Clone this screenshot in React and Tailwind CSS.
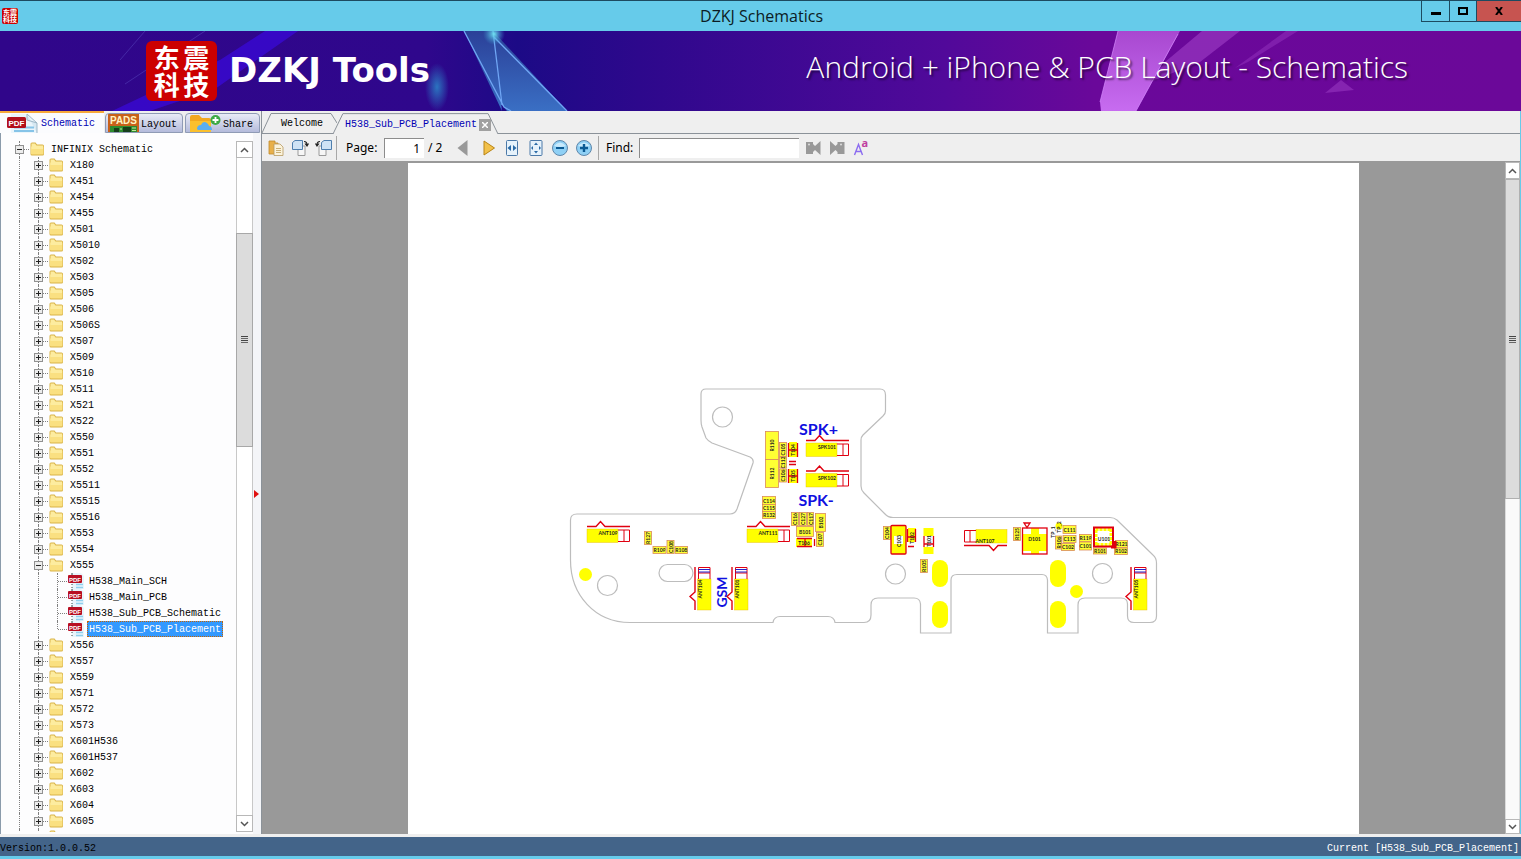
import { useState } from "react";

const FOLDERS_BEFORE = [
    "X180", "X451", "X454", "X455", "X501", "X5010", "X502", "X503", "X505", "X506", "X506S", "X507",
    "X509", "X510", "X511", "X521", "X522", "X550", "X551", "X552", "X5511", "X5515", "X5516", "X553", "X554",
];
const FOLDERS_AFTER = [
    "X556", "X557", "X559", "X571", "X572", "X573", "X601H536", "X601H537", "X602", "X603", "X604", "X605",
];
const FILES = ["H538_Main_SCH", "H538_Main_PCB", "H538_Sub_PCB_Schematic", "H538_Sub_PCB_Placement"];

// x, y, width, height, label, vertical
const PARTS = [
    [765.5, 431.5, 13, 28, "R110", true],
    [765.5, 459.5, 13, 28, "R112", true],
    [779.5, 442.5, 7, 14, "C105", true],
    [779.5, 457, 7, 11, "C112", true],
    [779.5, 469, 7, 13, "C106", true],
    [762.5, 496.5, 13, 8, "C114", false],
    [762.5, 504.5, 13, 7, "C115", false],
    [762.5, 511.5, 13, 7, "R132", false],
    [791.5, 512.5, 7, 13, "C116", true],
    [799.5, 512.5, 7, 13, "C127", true],
    [807.5, 512.5, 6, 13, "C117", true],
    [815.5, 513.5, 10, 18, "B102", true],
    [796.5, 526.5, 17, 10, "B101", false],
    [816.5, 532.5, 7, 14, "C107", true],
    [644.5, 531.5, 7, 13, "R127", true],
    [653, 546.5, 13, 7, "R109", false],
    [667, 540.5, 7, 13, "C108", true],
    [675, 546.5, 12.5, 7, "R108", false],
    [883.5, 526.5, 7, 13, "C104", true],
    [920.5, 559.5, 7, 13, "R105", true],
    [1013.5, 527.5, 7, 13, "R125", true],
    [1063, 525.5, 13, 8, "C111", false],
    [1055.5, 536, 6, 13, "R106", true],
    [1063, 535.5, 13, 7, "C113", false],
    [1061.5, 543.5, 13, 7, "C102", false],
    [1079.5, 534.5, 12, 7, "R119", false],
    [1079.5, 542, 12, 8, "C101", false],
    [1093.5, 548, 13, 6, "R101", false],
    [1115.5, 540.5, 12, 7, "R121", false],
    [1114.5, 548, 13, 6.5, "R102", false],
];

const Tiny = ({ x, y, vertical, children }) => (
    <text
        x={x}
        y={y}
        transform={vertical ? `rotate(-90 ${x} ${y})` : undefined}
        textAnchor="middle"
        dominantBaseline="central"
        fontSize="5"
        fontWeight="700"
        fill="#222"
    >
        {children}
    </text>
);

// spring contact: outline with a notch, pad and an open end
const Contact = ({ x, y, angle = 0, stripes = false }) => (
    <g transform={`translate(${x} ${y}) rotate(${angle})`}>
        <path d="M0 .5H9L13.5 -4.5L18 .5H43" fill="none" stroke="#e00010" strokeWidth="1.4" />
        <rect x="0" y="3" width="31" height="13.5" fill="#ff0" stroke="#e6b800" strokeWidth=".4" />
        <path d="M31 4H42.5V15.5H31M37 4V15.5" fill="none" stroke="#e00010" strokeWidth="1" />
        {stripes && <path d="M38 4V15.5M40.5 4V15.5" stroke="#2222cc" strokeWidth="1" />}
    </g>
);

const Board = () => (
    <svg viewBox="408 163 951 671" className="block w-full" fontFamily="Lato, 'Liberation Sans', sans-serif">
        <g fill="none" stroke="#bdbdbd" strokeWidth="1.2">
            <path d="M706 389H880Q885.500 389 885.500 395V411Q885.500 414 883 416L863 435Q861 437 861 440V486Q861 490 864 493L885 514Q888 517.500 893 517.500H1110Q1114 517.500 1117 520L1153 555Q1156.500 558 1156.500 563V616Q1156.500 622.500 1150 622.500H1134Q1127.500 622.500 1127.500 616V604Q1127.500 598 1121 598H1085Q1078 598 1078 605V633H1047.500V580Q1047 574.500 1042 574.500H957Q951 574.500 951 580V633H920.500V604Q920 598 914 598H878Q871 598 871 605V615Q871 622.500 864 622.500H835Q834 616.500 828 616.500H780Q774 616.500 773 622.500H630C595 622.500 570.500 595 570.500 560V520Q570.500 514 577 514H730Q735 514 737 509L753 463Q754 459 750 457L712 443Q708 441 706 438L702 427Q701 424 701 420V394Q701 389 706 389Z" />
            <circle cx="722.5" cy="417" r="10" />
            <circle cx="607.5" cy="585.5" r="10" />
            <circle cx="895.5" cy="574" r="10" />
            <circle cx="1102.500" cy="573.500" r="10" />
            <rect x="659" y="564.500" width="34" height="17" rx="8.500" />
        </g>
        <g fill="#ff0">
            <circle cx="585.5" cy="574.5" r="6.500" />
            <circle cx="1076.500" cy="591.500" r="6.500" />
            <rect x="932" y="560" width="16" height="27" rx="8" />
            <rect x="932" y="601" width="16" height="27" rx="8" />
            <rect x="1050" y="560" width="16" height="27" rx="8" />
            <rect x="1050" y="601" width="16" height="27" rx="8" />
        </g>

        <Contact x={587} y={526} />
        <Contact x={747} y={526} />
        <Contact x={806} y={440} />
        <Contact x={806} y={470.5} />
        <Contact x={1007} y={546} angle={180} />
        <Contact x={694.5} y={610} angle={-90} stripes />
        <Contact x={731.5} y={610} angle={-90} stripes />
        <Contact x={1130.5} y={610} angle={-90} stripes />
        <Tiny x={608} y={533}>ANT109</Tiny>
        <Tiny x={768} y={533}>ANT111</Tiny>
        <Tiny x={827} y={447}>SPK101</Tiny>
        <Tiny x={827} y={477.5}>SPK102</Tiny>
        <Tiny x={985} y={541}>ANT107</Tiny>
        <Tiny x={700} y={589} vertical>ANT104</Tiny>
        <Tiny x={737} y={589} vertical>ANT101</Tiny>
        <Tiny x={1136} y={589} vertical>ANT105</Tiny>

        {PARTS.map(([x, y, w, h, label, vertical]) => (
            <g key={`${label}-${x}`}>
                <rect x={x} y={y} width={w} height={h} fill="#ff3" stroke="#d98a5a" strokeWidth=".8" />
                <Tiny x={x + w / 2} y={y + h / 2} vertical={vertical}>{label}</Tiny>
            </g>
        ))}

        <g fill="#ff0">
            <rect x="789" y="442" width="8" height="15" />
            <rect x="789" y="469" width="8" height="14" />
            <rect x="796" y="538" width="16" height="9" />
            <rect x="891" y="526" width="15" height="28" />
            <rect x="908" y="528" width="8" height="14" />
            <rect x="923.500" y="528" width="10" height="8" />
            <rect x="923.500" y="547" width="10" height="7" />
            <path d="M1023 534H1031V528H1039V534H1047V551H1039V554H1031V551H1023Z" />
            <circle cx="1059" cy="526" r="3.500" />
        </g>
        <rect x="894" y="536" width="9" height="8" fill="#fff" />
        <g fill="none" stroke="#e00010" strokeWidth="1.3">
            <path d="M788.500 443V457M797.500 443V457M788.500 450H797.500M789 461.500H796M789 464.500H796M788.500 469V483M797.500 469V483M788.500 476H797.500" />
            <path d="M797 538.500H812M797 546.500H812M805 538V547M814.500 539V546" />
            <rect x="891" y="525.500" width="15" height="28.500" rx="1" />
            <path d="M907.500 529V542M915.500 529V542M907.500 537H915.500M908 546.500H914M924 536V547M933.500 536V547M924 544H933.500" />
            <rect x="1022.500" y="528" width="24.500" height="26" />
            <path d="M1024 523H1030L1027 527.500Z" />
            <path d="M1111 547H1115V541" strokeWidth="3" />
        </g>
        <rect x="1095.500" y="529" width="16" height="16" fill="#fff" stroke="#ff0" strokeWidth="4" strokeDasharray="3 1" />
        <rect x="1094" y="527.500" width="19" height="19" fill="none" stroke="#e00010" strokeWidth="2" />
        <Tiny x={793} y={450} vertical>T104</Tiny>
        <Tiny x={793} y={476} vertical>T105</Tiny>
        <Tiny x={804} y={543}>T106</Tiny>
        <Tiny x={898.5} y={541} vertical>C103</Tiny>
        <Tiny x={912} y={538} vertical>T102</Tiny>
        <Tiny x={928.5} y={541} vertical>T101</Tiny>
        <Tiny x={1034.5} y={539}>D101</Tiny>
        <Tiny x={1104} y={538.5}>U101</Tiny>
        <Tiny x={1053} y={532} vertical>TP_1</Tiny>
        <Tiny x={1059} y={527} vertical>TP_2</Tiny>

        <g fill="#1010e0" fontSize="16" fontWeight="700" textAnchor="middle">
            <text x="818.5" y="435">SPK+</text>
            <text x="816" y="505.5">SPK-</text>
            <text x="727" y="592" transform="rotate(-90 727 592)" fontSize="14">GSM</text>
        </g>
    </svg>
);

const FolderIcon = () => (
    <svg viewBox="0 0 16 16" className="h-4 w-4 shrink-0">
        <path d="M.500 3Q.500 1.500 2 1.500H5.500L7 3.500H12.500Q14 3.500 14 5V13Q14 14.500 12.500 14.500H2Q.500 14.500 .500 13Z" fill="#d9b347" />
        <path d="M1 5.500H13.500V12.500Q13.500 13.500 12.500 13.500H2Q1 13.500 1 12.500Z" fill="#fae081" />
        <path d="M1.500 2.500H5L6.500 4.500H13V8H1.500Z" fill="#fdec9f" />
    </svg>
);

const PdfIcon = () => (
    <svg viewBox="0 0 16 16" className="h-4 w-4 shrink-0">
        <path d="M4 0H13L16 3V16H4Z" fill="#e8f4fb" />
        <path d="M8 11.500H15M8 14.500H15" stroke="#8fd0ee" strokeWidth="1.500" />
        <path d="M4 0V2M4 11V12M4 14V15" stroke="#344" />
        <rect x="0" y="2" width="14" height="8" rx="1" fill="#b80f22" />
        <text x="7" y="8.500" fontSize="6" fontWeight="700" textAnchor="middle" fill="#fff" fontFamily="'Liberation Sans', sans-serif">PDF</text>
    </svg>
);

const Guide = () => (
    <span className="flex h-4 w-[19px] shrink-0 justify-center">
        <span className="h-4 w-px border-l border-dotted border-[#808080]" />
    </span>
);

const Toggle = ({ name, open, onClick }) => (
    <span className="grid h-4 w-[19px] shrink-0 items-center">
        <span className="col-start-1 row-start-1 h-4 w-px justify-self-center border-l border-dotted border-[#808080]" />
        <span className="col-start-1 row-start-1 h-px w-[9px] justify-self-end border-t border-dotted border-[#808080]" />
        <button
            type="button"
            aria-label={`${open ? "Collapse" : "Expand"} ${name}`}
            onClick={onClick}
            className="z-10 col-start-1 row-start-1 h-[9px] w-[9px] justify-self-center border border-[#919191] bg-[#ececec]"
        >
            <svg viewBox="0 0 7 7" className="block h-[7px] w-[7px]">
                <path d={open ? "M1 3.500H6" : "M1 3.500H6M3.500 1V6"} stroke="#222" />
            </svg>
        </button>
    </span>
);

const FolderRow = ({ name }) => (
    <li className="flex h-4 items-center">
        <Guide />
        <Toggle name={name || "folder"} open={false} />
        <span className="ml-px"><FolderIcon /></span>
        {name && <span className="ml-1 px-px pt-0.5">{name}</span>}
    </li>
);

const FileRow = ({ name, selected, last, onSelect }) => (
    <li className="flex h-4 items-center">
        <Guide />
        <Guide />
        <span className="grid h-4 w-[19px] shrink-0 items-center">
            <span className={`col-start-1 row-start-1 w-px self-start justify-self-center border-l border-dotted border-[#808080] ${last ? "h-2" : "h-4"}`} />
            <span className="col-start-1 row-start-1 h-px w-[9px] justify-self-end border-t border-dotted border-[#808080]" />
        </span>
        <span className="ml-px"><PdfIcon /></span>
        <button
            type="button"
            onClick={onSelect}
            className={`ml-[3px] h-4 border px-px pt-px leading-[13px] ${selected ? "border-dotted border-[#c86400] bg-[#3399ff] text-white" : "border-transparent"}`}
        >
            {name}
        </button>
    </li>
);

const Tree = () => {
    const [open, setOpen] = useState(true);
    const [selected, setSelected] = useState("H538_Sub_PCB_Placement");

    return (
        <ul className="min-h-0 flex-1 overflow-hidden pl-[9px] whitespace-nowrap">
            <li className="flex h-4 items-center">
                <Toggle name="INFINIX Schematic" open />
                <span className="ml-px"><FolderIcon /></span>
                <span className="ml-1 px-px pt-0.5">INFINIX Schematic</span>
            </li>
            {FOLDERS_BEFORE.map((name) => <FolderRow key={name} name={name} />)}
            <li className="flex h-4 items-center">
                <Guide />
                <Toggle name="X555" open={open} onClick={() => setOpen(!open)} />
                <span className="ml-px"><FolderIcon /></span>
                <span className="ml-1 px-px pt-0.5">X555</span>
            </li>
            {open && FILES.map((name, i) => (
                <FileRow
                    key={name}
                    name={name}
                    selected={name === selected}
                    last={i === FILES.length - 1}
                    onSelect={() => setSelected(name)}
                />
            ))}
            {FOLDERS_AFTER.map((name) => <FolderRow key={name} name={name} />)}
            <FolderRow />
        </ul>
    );
};

const ScrollButton = ({ label, down, className }) => (
    <button type="button" aria-label={label} className={`flex shrink-0 items-center justify-center border border-[#b8b8b8] bg-white ${className}`}>
        <svg viewBox="0 0 9 6" className="h-[6px] w-[9px]">
            <path d={down ? "M1 1L4.500 4.500L8 1" : "M1 5L4.500 1.500L8 5"} fill="none" stroke="#555" strokeWidth="1.500" />
        </svg>
    </button>
);

const Grip = () => (
    <span className="flex w-[7px] flex-col gap-px">
        <span className="h-px bg-[#444]" />
        <span className="h-px bg-[#666]" />
        <span className="h-px bg-[#444]" />
        <span className="h-px bg-[#666]" />
    </span>
);

const SideTab = ({ icon, label, active, className }) => (
    <button
        type="button"
        className={`flex items-center overflow-hidden whitespace-nowrap ${active
            ? "h-[22px] border-t-2 border-[#f7a93b] bg-[#fbfcfe] text-[#0000b4]"
            : "h-5 rounded-t-sm border border-[#8f9bb5] bg-linear-to-b from-[#e9ebf6] to-[#b4bbdb]"} ${className}`}
    >
        {icon}
        <span className={active ? "pt-px" : "pt-1"}>{label}</span>
    </button>
);

const SideTabs = () => (
    <div className="flex h-[22px] items-end gap-px bg-[#efefef]">
        <SideTab
            active
            label="Schematic"
            className="w-[104px] gap-[3px] pl-[7px]"
            icon={
                <svg viewBox="0 0 31 20" className="h-5 w-[31px]">
                    <path d="M4 1H20L30 10V20H4Z" fill="#eaf5fb" />
                    <path d="M20 1L30 10V20M20 1V7L30 10" fill="#d6e8f2" stroke="#9db7c6" />
                    <path d="M7 14.500H27M7 18H27" stroke="#86c4e8" strokeWidth="2" />
                    <rect x="0" y="4" width="19" height="11" rx="1.500" fill="#b3101c" />
                    <text x="9.500" y="12.500" fontSize="8" fontWeight="700" textAnchor="middle" fill="#fff" fontFamily="'Liberation Sans', sans-serif">PDF</text>
                </svg>
            }
        />
        <SideTab
            label="Layout"
            className="w-[78px] gap-[2px] pl-[2px]"
            icon={
                <svg viewBox="0 0 31 18" className="h-[18px] w-[31px] shrink-0">
                    <rect width="31" height="18" fill="#c8611a" />
                    <rect x="2" y="12" width="27" height="6" fill="#2e8b2e" />
                    <path d="M6 14H11V18H6ZM15 13H23V18H15Z" fill="#163f1c" />
                    <path d="M24 14H28M24 16.500H28M12 15H14" stroke="#c4e8a0" />
                    <text x="15.500" y="9.500" fontSize="10" fontWeight="700" textAnchor="middle" fill="#fff3c4" fontFamily="'Liberation Sans', sans-serif">PADS</text>
                </svg>
            }
        />
        <SideTab
            label="Share"
            className="ml-px w-[75px] gap-[2px] pl-[3px]"
            icon={
                <svg viewBox="0 0 32 18" className="h-[18px] w-8 shrink-0">
                    <path d="M1 3Q1 1 3 1H10L13 4H20Q22 4 22 6V18H1Z" fill="#f3a81f" />
                    <path d="M1 7H22V18H1Z" fill="#fbc02d" />
                    <path d="M8 15Q8 11 12 11Q14 6 18 9Q20 11 20 12Q23 12 23 16H9Z" fill="#5aaef0" />
                    <circle cx="26.500" cy="6" r="5" fill="#3daa45" />
                    <path d="M23.500 6H29.500M26.500 3V9" stroke="#fff" strokeWidth="1.800" />
                </svg>
            }
        />
    </div>
);

const DocTab = ({ active, label, className, children }) => (
    <div className={`relative flex items-center ${active ? "h-[23px]" : "h-[22px]"} ${className}`}>
        <svg viewBox="0 0 100 22" preserveAspectRatio="none" className="absolute inset-0 h-full w-full">
            <path
                d={active ? "M0 22L6 2.500H94L100 22" : "M0 22L12 2.500H92L100 12"}
                fill="#efefef"
                stroke="#8b9299"
                vectorEffect="non-scaling-stroke"
            />
        </svg>
        <button type="button" className={`relative pt-1 ${active ? "text-[#0000b4]" : "text-black"}`}>{label}</button>
        {children}
    </div>
);

const ToolButton = ({ label, wide, children }) => (
    <button type="button" aria-label={label} className={`flex h-6 shrink-0 items-center justify-center ${wide ? "w-[26px]" : "w-6"}`}>
        <svg viewBox="0 0 16 16" className="h-4 w-4 overflow-visible">{children}</svg>
    </button>
);

const Separator = () => <span className="h-6 w-px shrink-0 bg-[#a8a8a8]" />;

const Toolbar = () => (
    <div className="flex h-7 items-center border-b border-[#999999] bg-[#efefef] pl-[2px] font-['Noto_Sans','Open_Sans',sans-serif] text-[12px]">
        <ToolButton label="Open">
            <path d="M1 1H7V3H10V14H1Z" fill="#e8b04a" stroke="#c08a2c" strokeWidth=".8" />
            <path d="M6 4H12L15 7V15.500H6Z" fill="#fbf3dc" stroke="#b79a62" strokeWidth=".8" />
            <path d="M8 8.500H13M8 10.500H13M8 12.500H13" stroke="#c9b077" />
        </ToolButton>
        <ToolButton label="Rotate right">
            <path d="M6 6H13V15.500H6Z" fill="#f6f6f6" stroke="#9a9a9a" />
            <path d="M0.500 2.500L3 0.500H10.500V9.500H0.500Z" fill="#cfe3f5" stroke="#4f7fae" />
            <path d="M12 1.500Q15 1.500 15 5M13 3.500L15 6L16.500 3.500" fill="none" stroke="#222" strokeWidth="1.200" />
        </ToolButton>
        <ToolButton label="Rotate left">
            <path d="M3 6H10V15.500H3Z" fill="#f6f6f6" stroke="#9a9a9a" />
            <path d="M5.500 2.500L8 0.500H15.500V9.500H5.500Z" fill="#cfe3f5" stroke="#4f7fae" />
            <path d="M4 1.500Q1 1.500 1 5M-.5 3.500L1 6L3 3.500" fill="none" stroke="#222" strokeWidth="1.200" />
        </ToolButton>
        <Separator />
        <label htmlFor="page" className="ml-[9px] w-[38px] pt-px">Page:</label>
        <input
            id="page"
            defaultValue="1"
            className="h-5 w-10 border-t border-l border-[#8c8c8c] bg-white pr-1 text-right text-[12px] outline-none"
        />
        <span className="ml-1 w-[22px] pt-px whitespace-nowrap">/ 2</span>
        <ToolButton label="Previous page" wide>
            <path d="M12.500 0V16L2.500 8Z" fill="#999" />
        </ToolButton>
        <ToolButton label="Next page">
            <path d="M4 1V15L14.500 8Z" fill="#f2c14a" stroke="#b98414" />
        </ToolButton>
        <ToolButton label="Fit width">
            <rect x="2.500" y=".5" width="11" height="15" rx="1" fill="#e6f2fb" stroke="#4b79a8" />
            <path d="M7 5V11L3.500 8ZM9 5V11L12.500 8Z" fill="#2a6aa6" />
        </ToolButton>
        <ToolButton label="Fit page">
            <rect x="2" y=".5" width="12" height="15" rx="1" fill="#e6f2fb" stroke="#4b79a8" />
            <path d="M6 5L8 2.500L10 5ZM6 11L8 13.500L10 11ZM5 6L3 8L5 10ZM11 6L13 8L11 10Z" fill="#2a6aa6" />
        </ToolButton>
        <ToolButton label="Zoom out">
            <circle cx="8" cy="8" r="7.500" fill="#8fd0f5" stroke="#5f87ab" />
            <path d="M2 6Q8 -1 14 6Q8 8 2 6Z" fill="#c9eafc" />
            <path d="M4 8H12" stroke="#0b5a94" strokeWidth="2" />
        </ToolButton>
        <ToolButton label="Zoom in">
            <circle cx="8" cy="8" r="7.500" fill="#8fd0f5" stroke="#5f87ab" />
            <path d="M2 6Q8 -1 14 6Q8 8 2 6Z" fill="#c9eafc" />
            <path d="M4 8H12M8 4V12" stroke="#0b5a94" strokeWidth="2.400" />
        </ToolButton>
        <span className="ml-[2px] flex"><Separator /></span>
        <label htmlFor="find" className="ml-[7px] w-[33px] pt-px">Find:</label>
        <input id="find" className="h-5 w-40 border-t border-l border-[#8c8c8c] bg-white px-1 text-[12px] outline-none" />
        <span className="ml-[2px] flex">
            <ToolButton label="Find previous">
                <path d="M1 2H8V4L10 6L15.500 1V15L10 10L8 12V14H1Z" fill="#999" />
                <circle cx="4" cy="4.500" r="1" fill="#ddd" />
            </ToolButton>
            <ToolButton label="Find next">
                <path d="M15.500 2H8.500V4L6.500 6L1 1V15L6.500 10L8.500 12V14H15.500Z" fill="#999" />
                <circle cx="12" cy="4.500" r="1" fill="#ddd" />
            </ToolButton>
            <ToolButton label="Match case">
                <path d="M1.500 15L5.500 4.500L9.500 15M3 11.500H8" fill="none" stroke="#8c6cf0" strokeWidth="1.400" />
                <text x="8.500" y="7" fontSize="11" fontWeight="700" fill="#c040a0" fontFamily="'Noto Sans', sans-serif">a</text>
            </ToolButton>
        </span>
    </div>
);

const TitleBar = () => (
    <header className="flex h-[31px] shrink-0 items-start border-t border-[#1d4a60] bg-[#66cbea]">
        <div className="flex h-[30px] flex-1 items-center pl-[2px]">
            <svg viewBox="0 0 16 16" className="h-4 w-4">
                <rect width="16" height="16" rx="2" fill="#cc0000" />
                <g fontSize="7" fontWeight="700" fill="#fff" fontFamily="'Noto Sans CJK SC', sans-serif">
                    <text x="1" y="7">东震</text>
                    <text x="1" y="14">科技</text>
                </g>
            </svg>
        </div>
        <h1 className="font-['Open_Sans','Noto_Sans',sans-serif] text-[16px] leading-[30px] text-[#0c1c24]">DZKJ Schematics</h1>
        <div className="flex flex-1 justify-end">
            <div className="flex h-[21px] border-b border-l border-[#1d4a60]">
                <button type="button" aria-label="Minimize" className="flex w-[27px] items-center justify-center">
                    <span className="mt-1 h-[3px] w-2.5 bg-black" />
                </button>
                <button type="button" aria-label="Maximize" className="flex w-[27px] items-center justify-center border-l border-[#1d4a60]">
                    <span className="h-2 w-2.5 border-2 border-black" />
                </button>
                <button type="button" aria-label="Close" className="flex w-[45px] items-center justify-center border-l border-[#1d4a60] bg-[#c75450]">
                    <svg viewBox="0 0 8 8" className="h-2 w-2">
                        <path d="M1 0L7 8M7 0L1 8" stroke="#000" strokeWidth="2" />
                    </svg>
                </button>
            </div>
        </div>
    </header>
);

const Banner = () => (
    <section className="relative h-20 shrink-0 overflow-hidden bg-[#2f078c]">
        <svg viewBox="0 31 1521 80" preserveAspectRatio="none" className="absolute inset-0 h-full w-full">
            <defs>
                <linearGradient id="base">
                    <stop offset="0" stopColor="#30068a" />
                    <stop offset=".28" stopColor="#2f078c" />
                    <stop offset=".34" stopColor="#1c0a86" />
                    <stop offset=".42" stopColor="#2d088c" />
                    <stop offset=".62" stopColor="#51099a" />
                    <stop offset=".72" stopColor="#6a089a" />
                    <stop offset="1" stopColor="#6b0899" />
                </linearGradient>
                <linearGradient id="shard" x1="0" y1="0" x2="0" y2="1">
                    <stop offset="0" stopColor="#2b4098" />
                    <stop offset="1" stopColor="#3a6fc4" />
                </linearGradient>
                <linearGradient id="facet" x1="0" y1="0" x2="0" y2="1">
                    <stop offset="0" stopColor="#a848d0" />
                    <stop offset="1" stopColor="#c76cf0" />
                </linearGradient>
                <radialGradient id="glow">
                    <stop offset="0" stopColor="#2b74c0" />
                    <stop offset="1" stopColor="#2b74c0" stopOpacity="0" />
                </radialGradient>
                <radialGradient id="spark">
                    <stop offset="0" stopColor="#6fe0f0" />
                    <stop offset="1" stopColor="#3a9ad0" stopOpacity="0" />
                </radialGradient>
            </defs>
            <rect y="31" width="1521" height="80" fill="url(#base)" />
            <path d="M265 31H298L215 89L150 111H112L220 60Z" fill="#3a0ad8" opacity=".75" />
            <path d="M205 31L125 84M145 31L120 60" stroke="#5a4ac0" opacity=".5" />
            <ellipse cx="437" cy="87" rx="12" ry="24" fill="url(#glow)" />
            <path d="M464 31H493L502 111Z" fill="url(#shard)" />
            <path d="M493 31L567 111H507L501 104Z" fill="url(#shard)" />
            <path d="M464 31L504 107L511 111M493 31L502 105M493 36L567 111" fill="none" stroke="#6fa6f4" strokeWidth="1.300" />
            <circle cx="494" cy="34" r="11" fill="url(#spark)" />
            <path d="M1118 31H1180L1136 111H1101L1100 102Z" fill="url(#facet)" />
            <path d="M1202 31H1240L1200 62L1150 82L1165 62Z" fill="#a040c8" opacity=".6" />
            <path d="M1286 31H1298L1248 62L1235 68Z" fill="#a040c8" opacity=".4" />
            <path d="M1341 80L1354 90L1325 93Z" fill="#a040c8" opacity=".5" />
            <path d="M1118 31L1100 102M1178 34L1136 111" stroke="#d78cff" strokeWidth="1" opacity=".7" />
        </svg>
        <div className="relative flex h-20 items-center justify-between pr-[113px] pl-[146px] text-white">
            <div className="flex items-center gap-3">
                <div className="grid h-[60px] w-[71px] grid-cols-2 place-items-center rounded-md bg-[#cc0000] px-1.5 pt-[2px] pb-1 font-['Noto_Sans_CJK_SC',sans-serif] text-[26px] leading-[26px] font-bold">
                    <span>东</span>
                    <span>震</span>
                    <span>科</span>
                    <span>技</span>
                </div>
                <h2 className="pb-[2px] font-['DejaVu_Sans',sans-serif] text-[34px] leading-[40px] font-bold">DZKJ Tools</h2>
            </div>
            <p className="pb-2 font-['Open_Sans','Noto_Sans',sans-serif] text-[30px] leading-[36px] whitespace-nowrap font-light [text-shadow:2px_2px_2px_#0008]">
                Android + iPhone &amp; PCB Layout - Schematics
            </p>
        </div>
    </section>
);

export default function App() {
    return (
        <div className="flex h-screen flex-col bg-[#efefef] font-['Liberation_Mono',monospace] text-[10px] leading-4 text-black">
            <TitleBar />
            <Banner />

            <main className="flex min-h-0 flex-1 border-r border-[#66cbea]">
                <aside className="flex w-[262px] shrink-0 flex-col border-r border-[#8b9299] bg-[#fdfdfe]">
                    <SideTabs />
                    <div className="flex min-h-0 flex-1">
                        <div className="flex min-w-0 flex-1 border-l border-[#8b9bab] pt-2 pb-[2px]">
                            <Tree />
                            <div className="flex w-[17px] flex-col">
                                <ScrollButton label="Scroll tree up" className="h-[17px]" />
                                <div className="flex-[75] border-x border-[#c8c8c8] bg-white" />
                                <div className="flex flex-[213] items-center justify-center border border-[#a8a8a8] bg-[#dcdcdc]">
                                    <Grip />
                                </div>
                                <div className="flex-[369] border-x border-[#c8c8c8] bg-white" />
                                <ScrollButton label="Scroll tree down" down className="h-[17px]" />
                            </div>
                        </div>
                        <div className="flex w-2 items-center bg-[#f4f5f8] pt-5">
                            <svg viewBox="0 0 5 8" className="ml-px h-2 w-[5px]">
                                <path d="M0 0L5 4L0 8Z" fill="#e01010" />
                            </svg>
                        </div>
                    </div>
                </aside>

                <section className="flex min-w-0 flex-1 flex-col">
                    <div className="flex h-[23px] items-start">
                        <div className="h-[23px] border-b border-[#8b9299]">
                            <DocTab label="Welcome" className="w-[75px] pl-[19px]" />
                        </div>
                        <DocTab active label="H538_Sub_PCB_Placement" className="-ml-1 w-[165px] pl-[12px]">
                            <button type="button" aria-label="Close tab" className="relative mt-1 ml-[2px] flex h-3 w-3 items-center justify-center bg-[#a0a0a0]">
                                <svg viewBox="0 0 6 6" className="h-1.5 w-1.5">
                                    <path d="M0 0L6 6M6 0L0 6" stroke="#fff" strokeWidth="1.500" />
                                </svg>
                            </button>
                        </DocTab>
                        <div className="h-[23px] flex-1 border-b border-[#8b9299]" />
                    </div>
                    <Toolbar />
                    <div className="flex min-h-0 flex-1">
                        <div className="flex min-w-0 flex-1 justify-center overflow-hidden bg-[#999999] pt-px">
                            <div className="w-[951px] max-w-full bg-white">
                                <Board />
                            </div>
                        </div>
                        <div className="flex w-[15px] flex-col bg-[#fafafa]">
                            <ScrollButton label="Scroll page up" className="h-[17px]" />
                            <div className="flex flex-[320] items-center justify-center border border-[#b0b0b0] bg-[#dcdcdc]">
                                <Grip />
                            </div>
                            <div className="flex-[322] border-x border-[#dcdcdc]" />
                            <ScrollButton label="Scroll page down" down className="h-[15px]" />
                        </div>
                    </div>
                </section>
            </main>

            <footer className="mt-[3px] flex h-[22px] shrink-0 justify-between border-b-[3px] border-[#66cbea] bg-[#436489] pt-[5px] pr-[2px] leading-[14px]">
                <span>Version:1.0.0.52</span>
                <span className="text-white">Current [H538_Sub_PCB_Placement]</span>
            </footer>
        </div>
    );
}
